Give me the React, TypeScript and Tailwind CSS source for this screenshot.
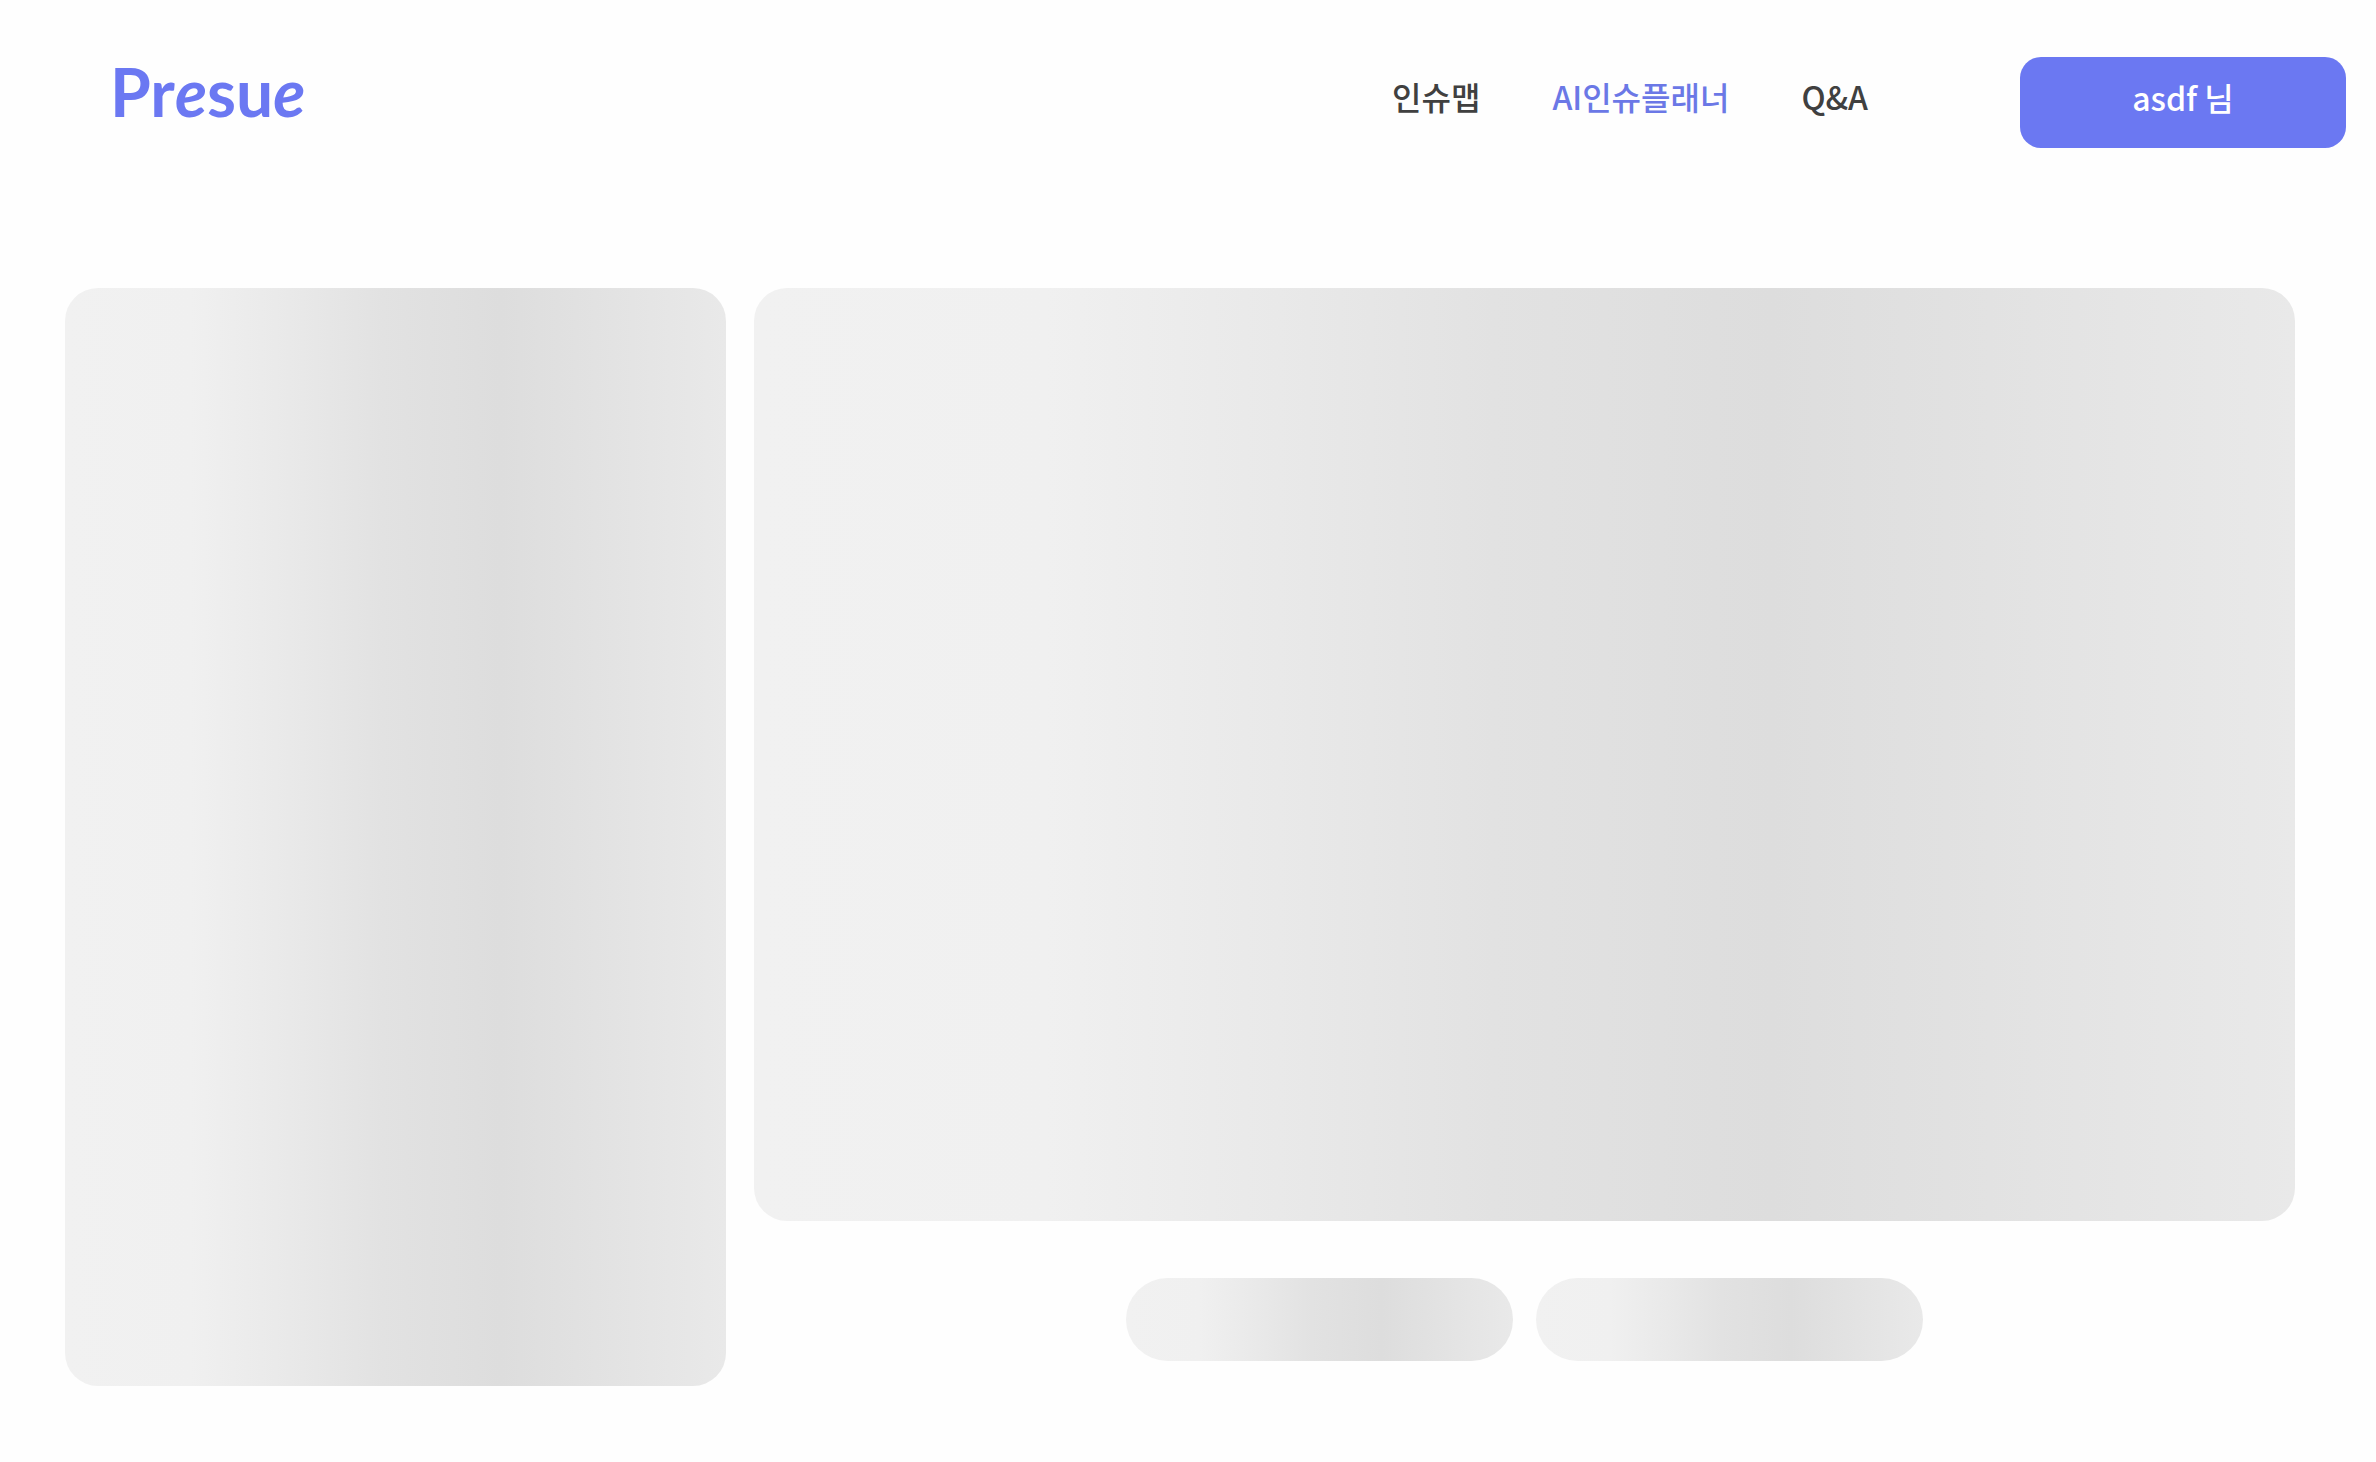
const shimmer = "bg-[linear-gradient(90deg,#f1f1f1_0%,#f0f0f0_19%,#e9e9e9_34%,#e2e2e2_48%,#dddddd_66%,#e9e9e9_100%)]";

function Logo() {
  return (
    <a href="/" className="font-['Lato',sans-serif] text-[66px] leading-[72px] font-bold text-[#6b78f2]" data-name="Logo">
      Pr<em>e</em>su<em>e</em>
    </a>
  );
}

function Nav() {
  return (
    <nav className="flex items-center gap-[72px] text-[32px] leading-12 font-medium text-[#404040]" data-name="Nav">
      <a href="/map">인슈맵</a>
      <a href="/planner" className="text-[#6b78e6]" aria-current="page">AI인슈플래너</a>
      <a href="/qna">Q&amp;A</a>
    </nav>
  );
}

function Header() {
  return (
    <header className="flex items-start justify-between pt-14 pr-[30px] pl-[110px]" data-name="Header">
      <Logo />
      <div className="flex items-start gap-[152px]">
        <div className="pt-4">
          <Nav />
        </div>
        <button type="button" className="mt-px h-[91px] w-[326px] rounded-[21px] bg-[#6b78f2] pb-3 text-[32px] leading-12 font-medium text-white">
          asdf 님
        </button>
      </div>
    </header>
  );
}

function Skeleton({ className }: { className: string }) {
  return <div className={`${shimmer} ${className}`} data-name="Skeleton" />;
}

function Content() {
  return (
    <main className="flex items-start gap-7 pt-[140px] pr-[81px] pb-[76px] pl-[65px]" aria-busy="true" data-name="Content">
      <Skeleton className="h-[1098px] flex-[3] rounded-[33px]" />
      <div className="flex flex-[7] flex-col gap-[57px]">
        <Skeleton className="h-[933px] w-full rounded-[33px]" />
        <div className="flex justify-center gap-[23px]">
          <Skeleton className="h-[83px] w-[387px] rounded-full" />
          <Skeleton className="h-[83px] w-[387px] rounded-full" />
        </div>
      </div>
    </main>
  );
}

export default function App() {
  return (
    <div className="min-h-screen bg-[#fefefe] font-['Noto_Sans_CJK_KR',sans-serif]" data-name="App">
      <Header />
      <Content />
    </div>
  );
}
